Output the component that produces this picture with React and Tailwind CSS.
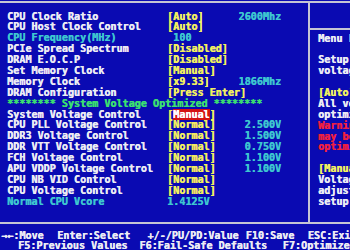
import React from "react";

const W = "text-[#ececf4]";
const Y = "text-[#f2f060]";
const C = "text-[#3ec6d0]";
const G = "text-[#3ce070]";
const R = "text-[#f02040]";

function Row({ label, value, extra, labelCls = W, valueCls = Y, children }) {
  return (
    <div className="flex h-[10.9px] whitespace-pre">
      <div className={`w-[160px] shrink-0 ${labelCls}`}>{label}</div>
      <div className="w-[114px] shrink-0 flex justify-between">
        <span className={valueCls}>{children || value}</span>
        {extra ? <span className={C}>{extra}</span> : null}
      </div>
    </div>
  );
}

export default function App() {
  const help = [
    ["Menu Level  \u25ba", W],
    ["", W],
    ["Setup system", W],
    ["voltage", W],
    ["", W],
    ["[Auto]", Y],
    ["All voltages", W],
    ["optimized", W],
    ["Warning:", R],
    ["may be unstable", R],
    ["optimization", R],
    ["", W],
    ["[Manual]", Y],
    ["Voltage", W],
    ["adjustable", W],
    ["setup", W],
  ];
  return (
    <div className="w-[350px] h-[250px] overflow-hidden bg-[#0a0ab2] [font-family:'DejaVu_Sans_Mono',monospace] font-bold text-[10.1px] leading-[10.9px] [text-shadow:0.4px_0_0_currentColor]">
      <div className="h-[1px]" />
      <div className="h-[2px] bg-[#c4c4d4]" />
      <div className="flex h-[219px]">
        <div className="w-[308px] shrink-0 pl-[7px] pt-[8.5px]">
          <Row label="CPU Clock Ratio" value="[Auto]" extra="2600Mhz" />
          <Row label="CPU Host Clock Control" value="[Auto]" />
          <Row label="CPU Frequency(MHz)" value=" 100" labelCls={C} valueCls={C} />
          <Row label="PCIe Spread Spectrum" value="[Disabled]" />
          <Row label="DRAM E.O.C.P" value="[Disabled]" />
          <Row label="Set Memory Clock" value="[Manual]" />
          <Row label="Memory Clock" value="[x9.33]" extra="1866Mhz" />
          <Row label="DRAM Configuration" value="[Press Enter]" />
          <div className={`h-[10.9px] whitespace-pre ${G}`}>
            ******** System Voltage Optimized ********
          </div>
          <Row label="System Voltage Control">
            <span>[</span>
            <span className="bg-[#d41414] text-white">Manual</span>
            <span>]</span>
          </Row>
          <Row label="CPU PLL Voltage Control" value="[Normal]" extra="2.500V" />
          <Row label="DDR3 Voltage Control" value="[Normal]" extra="1.500V" />
          <Row label="DDR VTT Voltage Control" value="[Normal]" extra="0.750V" />
          <Row label="FCH Voltage Control" value="[Normal]" extra="1.100V" />
          <Row label="APU VDDP Voltage Control" value="[Normal]" extra="1.100V" />
          <Row label="CPU NB VID Control" value="[Normal]" />
          <Row label="CPU Voltage Control" value="[Normal]" />
          <Row label="Normal CPU Vcore" value="1.4125V" labelCls={C} valueCls={C} />
        </div>
        <div className="w-[2px] shrink-0 bg-[#c4c4d4]" />
        <div className="flex-1 min-w-0 flex flex-col overflow-hidden">
          <div className="h-[25px] shrink-0" />
          <div className="h-[2px] shrink-0 bg-[#c4c4d4]" />
          <div className="pl-[8px] pt-[3.5px] whitespace-pre">
            {help.map(([t, c], i) => (
              <div key={i} className={`h-[10.9px] ${c}`}>{t}</div>
            ))}
          </div>
        </div>
      </div>
      <div className="h-[2px] bg-[#c4c4d4]" />
      <div className={`pt-[6.5px] ${W} leading-[10px] whitespace-pre`}>
        <div className="flex h-[10px] pl-[1px]">
          <span className="shrink-0">{"\u2192\u2190:Move"}</span>
          <span className="shrink-0 ml-[13.6px]">Enter:Select</span>
          <span className="shrink-0 ml-[17.3px]">+/-/PU/PD:Value</span>
          <span className="shrink-0 ml-[7.1px]">F10:Save</span>
          <span className="shrink-0 ml-[13.5px]">ESC:Exit</span>
          <span className="shrink-0 ml-[12px]">F1:General Help</span>
        </div>
        <div className="flex h-[10px] pl-[18px]">
          <span className="shrink-0">F5:Previous Values</span>
          <span className="shrink-0 ml-[12px]">F6:Fail-Safe Defaults</span>
          <span className="shrink-0 ml-[15.7px]">F7:Optimized Defaults</span>
        </div>
      </div>
    </div>
  );
}
